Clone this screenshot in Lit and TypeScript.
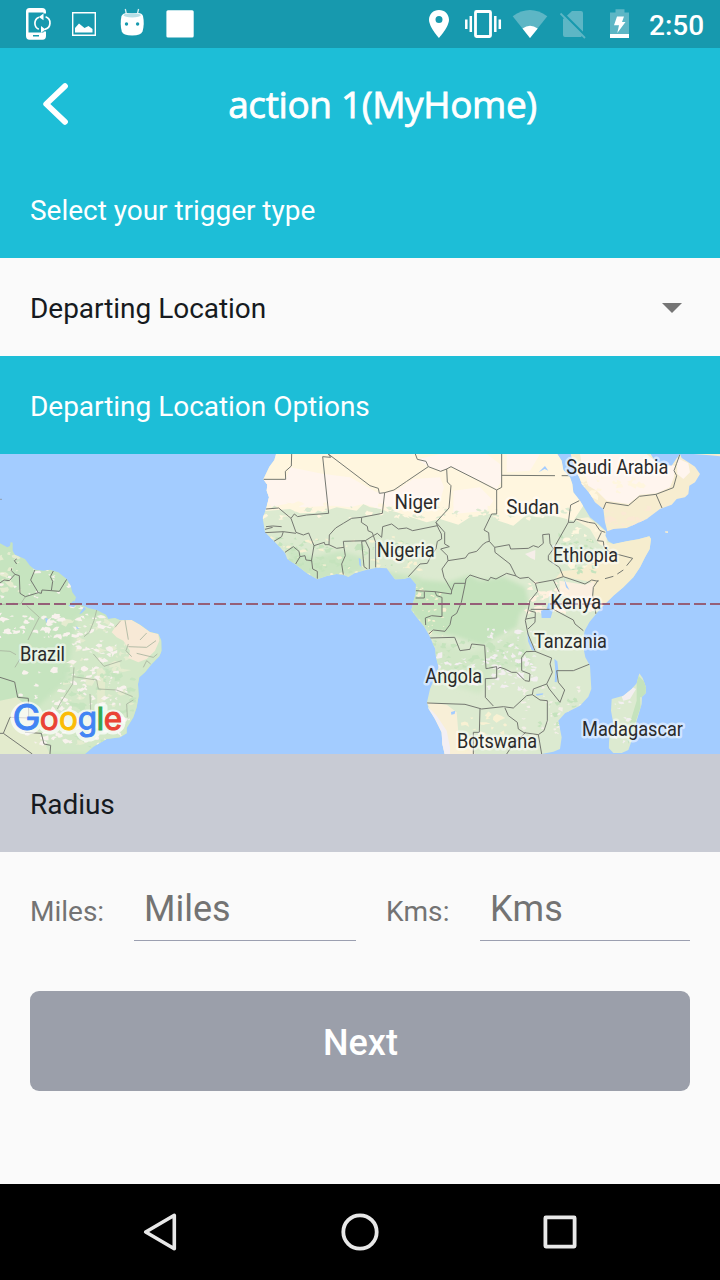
import { LitElement, html, css, svg } from "lit";
import { customElement } from "lit/decorators.js";

/* Map geometry is on a 2160x900 grid, split into three 720-unit wide tiles. */
const SOUTH_AMERICA =
  "M0,268 L22,280 30,276 32,264 38,266 38,290 45,302 75,315 90,335 105,347 130,350 150,347 175,355 200,375 212,395 217,415 228,430 222,448 250,455 265,462 290,468 318,482 325,495 345,492 360,499 395,498 420,512 450,534 475,540 484,560 485,590 478,607 455,630 435,655 418,670 414,690 416,725 410,760 400,790 380,822 380,838 360,850 320,855 280,878 255,900 0,900Z";
const AFRICA =
  "M108,0 L103,18 88,38 70,76 82,92 80,110 87,130 78,165 68,192 75,235 102,262 120,280 135,297 142,315 165,330 200,357 232,376 260,366 290,360 310,362 325,369 345,357 375,349 410,341 440,343 450,356 465,376 490,375 510,370 528,390 527,420 520,445 514,468 530,490 552,517 568,545 586,585 588,610 596,640 585,670 570,705 561,745 566,765 585,795 605,835 607,870 614,900 L905,900 940,893 960,885 965,850 955,800 975,778 1020,755 1045,728 1054,705 1050,635 1036,610 1032,590 1030,555 1034,530 1048,505 1070,478 1085,460 1120,425 1150,400 1180,370 1200,340 1215,310 1229,285 1233,255 1228,247 1195,256 1160,262 1120,270 1105,262 1096,245 1098,232 1075,210 1050,190 1035,165 1020,140 1000,115 997,90 990,70 970,48 965,20 952,0Z";
const ARABIA =
  "M272,0 L283,40 300,75 305,90 330,120 345,145 370,165 375,205 382,232 400,225 440,222 500,195 540,165 575,152 590,135 615,130 625,120 628,95 645,85 660,60 645,38 625,25 605,12 600,0 L588,16 575,35 550,34 525,22 512,0Z";
const MADAGASCAR =
  "M478,658 L488,672 498,700 497,718 486,728 485,750 470,800 455,860 445,888 425,897 400,897 386,882 388,850 402,820 393,770 395,735 430,725 455,705 470,688Z";

const SAM_LINES = [
  "M0,387 L12,378 28,380 45,361 58,365 60,418 76,428 115,416 92,378 105,347",
  "M160,351 L151,368 158,382 154,410 178,412 200,376",
  "M115,416 L124,418 126,408 154,410 M35,343 L34,350 45,361 M50,315 L43,320 50,330",
  "M0,670 L44,684 53,730 85,733 86,792 30,790 10,838 97,900 M0,838 L10,838 M75,835 L124,838 132,870 152,874 150,900",
];
const SAM_FAINT = [
  "M0,452 L40,448 62,450 76,428 M80,455 L118,490 100,525 84,558 M0,590 L30,592 48,602 M60,615 L45,640",
  "M290,468 L282,500 268,535 252,548 M345,520 L362,500 M375,498 L385,557 M385,570 L378,590 395,608 M420,558 L440,537 M385,578 L440,580 468,560 M410,598 L460,610 472,600 M430,640 L440,620 452,630",
  "M280,600 L312,637 365,620 M222,640 L218,690 182,745 172,765 M220,668 L290,678 295,705 350,708 398,728 M270,720 L272,770 265,790 M400,738 L380,750 382,790",
];
const AFR_LINES = [
  "M155,0 L154,36 136,52 137,76 70,76 M265,0 L272,10 248,8 266,178 200,183 173,188 163,180 153,193 116,162 78,165",
  "M265,0 L390,95 415,103 418,118 434,116 462,108 500,82 565,38 M526,0 L532,16 558,22 565,38 602,52 620,45 633,38 720,82 770,108 770,180 755,180 732,228 746,236 748,262 764,280",
  "M434,116 L427,178 365,190 335,193 310,208 287,222 268,243 267,272 255,272 253,265 222,275 206,237 190,243 168,235 153,193",
  "M365,190 L364,205 382,217 384,230 397,236 400,245 376,260 M400,245 L412,238 425,250 428,218 455,210 475,225 500,222 518,230 592,215",
  "M620,45 L622,84 633,95 627,162 588,205 596,225 604,240 605,255 592,262 588,285 575,302 562,328 540,330 505,368",
  "M588,205 L614,235 614,270 628,278 602,285 622,305 624,320 606,345 612,370 635,410 634,420 585,413 527,410",
  "M624,320 L676,312 686,298 710,292 730,270 740,264 748,262",
  "M635,410 L643,388 676,388 678,375 690,363 720,373 745,380 752,370 768,375 800,358 828,366 840,373 865,370 886,388",
  "M676,388 L664,445 650,478 635,488 630,512 615,532 580,528 566,540",
  "M585,413 L590,425 606,430 606,488 575,485 556,492 557,513 M527,432 L553,432 553,413 M568,552 L644,550 660,590 690,586 695,570 734,574 738,644 770,638 770,672 736,674 736,730 760,756",
  "M561,747 L675,751 725,765 790,758 820,762 860,725 877,722 900,738 922,740 922,800 912,830 895,842 852,836 835,825 832,805 805,785 795,762 M720,765 L718,835 700,835 700,900 M895,842 L905,900 M857,835 L820,870 800,900",
  "M75,236 L130,233 168,238 M130,233 L125,248 102,262 M78,218 L98,216 125,218 M75,226 L98,220 M135,295 L160,278 177,292 180,308 167,330 M180,308 L195,305 198,318 215,320 218,345 232,352 232,374 M222,275 L214,322",
  "M267,272 L290,283 312,280 310,262 376,260 365,262 372,338 382,345 M376,260 L388,285 388,345 M400,245 L407,265 407,340 M312,280 L316,305 305,330 310,362",
  "M785,0 L785,100 770,108 M785,64 L945,65 M965,65 L990,65 M1018,140 L992,153 985,205 940,285 925,305",
  "M985,205 L1002,205 1008,195 1045,205 1065,208 1080,230 1096,235 M1084,235 L1072,260 1090,262 1092,278 1110,295 1178,313 1160,335",
  "M1150,348 L1132,360 M1120,367 L1095,374 M1075,378 L1060,400 1058,425 M925,305 L925,318 958,340 970,368 1035,390 1055,378 1075,382 M1058,425 L1068,480",
  "M764,280 L808,272 812,285 865,283 880,275 895,280 910,268 908,242 928,240 930,268 940,285 M764,280 L765,295 810,330 828,366",
  "M886,388 L940,378 970,368 M940,378 L958,415 M886,388 L893,412 870,440 864,470 856,500 864,540 885,590 M872,466 L940,466 1000,498 1005,510 1030,530",
  "M868,470 L886,475 885,505 864,525 M858,495 L885,490 M885,592 L858,593 845,610 845,650 870,660 868,682 855,680 830,655 815,655 795,645 780,640 772,645",
  "M885,592 L935,612 930,630 937,655 920,690 928,705 960,745 974,708 955,685 950,650 1000,650 1050,630 M920,690 L880,705 877,722",
];
const ARA_LINES = [
  "M370,165 L378,145 445,155 478,127 528,121 580,101 590,65 582,50 590,28 600,0",
  "M528,121 L546,162",
];

/* Small irregular patches of vegetation and bare ground. */
function patches(seed: number, n: number, x: number, y: number, w: number, h: number, size: number) {
  let s = seed;
  const r = () => (s = (s * 16807) % 2147483647) / 2147483647;
  let d = "";
  for (let i = 0; i < n; i++) {
    const cx = x + r() * w, cy = y + r() * h, k = size * (0.3 + r());
    for (let j = 0; j < 7; j++) {
      const a = (j / 7) * Math.PI * 2, q = k * (0.15 + r() * 1.3);
      d += (j ? "L" : "M") + (cx + Math.cos(a) * q * 1.3).toFixed(1) + "," + (cy + Math.sin(a) * q * 0.8).toFixed(1);
    }
    d += "Z";
  }
  return d;
}

const LABELS: [string, number, number, number][] = [
  ["Niger", 394.5, 55, 45],
  ["Nigeria", 376.8, 103, 58],
  ["Sudan", 506.3, 60, 53],
  ["Saudi Arabia", 566.3, 20, 102],
  ["Ethiopia", 553, 108, 65],
  ["Kenya", 550.3, 155, 51],
  ["Tanzania", 534, 194, 73],
  ["Angola", 425.3, 229, 57],
  ["Botswana", 457, 294, 80],
  ["Madagascar", 582, 282, 101],
  ["Brazil", 20, 207, 45],
];
const LOGO: [string, number, string][] = [
  ["o", 39.8, "#ea4335"], ["o", 59, "#fbbc05"],
  ["g", 77.8, "#4285f4"], ["l", 96.5, "#34a853"], ["e", 103.7, "#ea4335"],
];

@customElement("location-map")
class LocationMap extends LitElement {
  static styles = css`
    :host { display: block; height: 300px; }
    svg { display: block; }
    .border { fill: none; stroke: #747770; stroke-width: 3; stroke-linejoin: round; }
    .faint { fill: none; stroke: #a9b5a0; stroke-width: 2.6; }
    .label { font-family: Roboto, sans-serif; font-size: 19.5px; fill: #2b2b2b; stroke: #fff; stroke-opacity: .5; stroke-width: 5px; stroke-linejoin: round; paint-order: stroke; }
    .logo { font-family: Inter, sans-serif; font-size: 31.5px; font-weight: 400; stroke-width: 1px; }
    .cap { font-size: 35px; }
    .halo { stroke: #fff; fill: #fff; opacity: .7; stroke-width: 7px; stroke-linejoin: round; }
  `;
  render() {
    const lines = (a: string[], c: string) => a.map((d) => svg`<path class=${c} d=${d}/>`);
    return html`<svg width="720" height="300" viewBox="0 0 720 300">
      <defs>
        <clipPath id="sa"><path d=${SOUTH_AMERICA} /></clipPath>
        <clipPath id="af"><path d=${AFRICA} /></clipPath>
        <clipPath id="ar"><path d=${ARABIA} /></clipPath>
        <clipPath id="md"><path d=${MADAGASCAR} /></clipPath>
        <filter id="soft"><feGaussianBlur stdDeviation="7" /></filter>
      </defs>
      <rect width="720" height="300" fill="#a3ccff" />
      <g transform="scale(.333333)">
        <g clip-path="url(#sa)">
          <rect width="500" height="900" fill="#c6e4bf" />
          <path filter="url(#soft)" fill="#d3e8c8" d="M230,490 L500,490 500,900 100,900 90,780 200,680Z" />
          <path fill="#e3ebcd" d="M0,740 L50,730 85,760 86,792 120,840 150,900 0,900Z M290,640 L316,660 314,740 292,750Z" />
          <path fill="#e5ecd0" d=${patches(19, 60, 200, 500, 200, 380, 11)} />
          <path fill="#e5ecd0" d=${patches(9, 16, 0, 280, 60, 150, 11)} />
          <path fill="#f8f2ed" d=${patches(7, 45, 0, 480, 210, 75, 8)} />
          <path fill="#f8f2ed" d=${patches(71, 100, 60, 640, 330, 240, 8)} />
          <path fill="#f8f2ed" d=${patches(37, 45, 210, 450, 140, 200, 9)} />
          <path fill="#f8f2ed" d=${patches(13, 22, 0, 290, 210, 140, 6)} />
          <path fill="#c6e4bf" d=${patches(99, 45, 200, 640, 210, 240, 10)} />
          <path fill="#f7e9d6" d="M360,499 L395,498 420,512 450,534 475,540 478,560 465,590 440,615 415,625 385,612 390,590 370,560 350,550 335,535Z" />
          <path fill="#a3ccff" d="M238,480 L252,458 258,465 245,478Z M138,508 L136,492 144,494Z M228,516 L238,524 230,524Z M205,456 L220,440 232,448 222,460Z" />
          ${lines(SAM_FAINT, "faint")}${lines(SAM_LINES, "border")}
        </g>
        <g transform="translate(720 0)">
          <g clip-path="url(#af)">
            <rect width="1260" height="900" fill="#dcead0" />
            <path fill="#fff6df" d="M0,0 L1010,0 1040,140 1000,200 960,190 900,178 860,182 820,215 775,200 755,178 730,185 690,190 655,212 600,195 560,205 500,185 470,175 430,165 390,160 370,150 350,170 290,160 240,176 180,178 150,165 60,172Z" />
            <path fill="#fff5ee" d="M70,78 L137,76 150,40 250,60 330,70 410,115 434,116 465,112 520,75 600,70 612,100 600,140 560,150 460,155 420,165 370,150 330,160 280,155 180,160 150,148 85,160Z M600,0 L740,0 780,30 785,80 770,105 633,38 602,52 565,38 532,16Z M640,110 L720,100 760,140 740,170 640,180Z M800,0 L900,0 870,50 800,55Z" />
            <path fill="#fff6df" d=${patches(21, 40, 70, 150, 920, 50, 11)} />
            <path fill="#dcead0" d=${patches(29, 60, 90, 160, 900, 40, 8)} />
            <path filter="url(#soft)" fill="#c5e3bd" d="M520,375 L625,385 690,363 720,380 790,368 855,400 868,450 840,480 830,520 760,555 730,575 640,545 560,530 500,460Z" />
            <path filter="url(#soft)" fill="#cbe5c2" d="M130,270 L220,310 300,290 370,310 370,350 230,390 160,340Z M430,350 L540,370 540,400 460,390Z" />
            <path filter="url(#soft)" fill="#d2e7c7" d="M580,560 L690,595 740,580 850,520 880,640 760,650 720,720 590,680Z" />
            <path fill="#c5e3bd" d=${patches(41, 75, 110, 250, 400, 120, 8)} />
            <path fill="#f8f1d3" d=${patches(23, 65, 90, 250, 460, 110, 6)} />
            <path fill="#f8f1d3" d=${patches(57, 30, 520, 400, 100, 150, 6)} />
            <path fill="#c5e3bd" d=${patches(47, 40, 580, 560, 280, 80, 9)} />
            <path fill="#f3eff0" d=${patches(31, 55, 590, 600, 300, 110, 8)} />
            <path fill="#f3eff0" d=${patches(43, 45, 740, 520, 150, 160, 7)} />
            <path fill="#f4efe8" d=${patches(67, 35, 850, 700, 170, 150, 7)} />
            <path fill="#f8efd7" d="M561,745 L620,752 650,775 655,835 690,860 705,900 600,900 600,830Z" />
            <path fill="#f3eff3" d="M561,755 L590,785 620,830 630,880 630,900 605,900Z" />
            <path fill="#f8f1d3" d=${patches(83, 24, 650, 780, 150, 110, 10)} />
            <path fill="#f6edce" d="M1085,262 L1120,270 1240,240 1230,300 1180,380 1085,460 1060,430 1060,385 970,368 945,375 965,352 1030,345 1060,310 1110,300Z" />
            <path fill="#f9f2d9" d="M1002,195 L1045,190 1100,235 1100,285 1075,268 1050,225Z" />
            <path fill="#fbefe0" d="M958,380 L1035,392 1062,382 1058,425 1085,460 1050,475 1020,450 985,430 960,415Z" />
            <path fill="#fff1df" d=${patches(91, 40, 865, 385, 130, 90, 9)} />
            <path fill="#c5e3bd" d=${patches(53, 40, 955, 240, 110, 120, 7)} />
            <path fill="#fff7df" d=${patches(63, 16, 980, 220, 100, 130, 8)} />
            <path fill="#f6eee9" d="M855,300 L886,288 885,318 872,312Z" />
            <path fill="#c5e3bd" d=${patches(59, 22, 900, 730, 140, 110, 7)} />
            <path fill="#a3ccff" d="M903,470 L920,465 925,448 940,445 940,465 932,492 905,492Z M862,525 L870,560 884,590 875,588 864,562Z M943,615 L952,622 955,648 950,685 944,684 946,650Z M972,372 L980,392 988,408 978,400Z M356,312 L362,315 364,340 358,333Z M633,774 L646,770 644,780 634,782Z M888,720 L910,718 908,722 890,725Z M896,55 L915,36 925,50 914,45Z" />
            ${lines(AFR_LINES, "border")}
          </g>
        </g>
        <g transform="translate(1440 0)">
          <g clip-path="url(#ar)">
            <rect x="250" width="450" height="250" fill="#f7edd0" />
            <path fill="#fff5ee" d="M300,0 L500,0 530,25 585,35 582,70 570,100 530,118 480,122 445,150 380,140 350,110 325,95 310,55Z M590,12 L625,28 630,55 610,75 592,60Z" />
            <path fill="#fbe9d4" d=${patches(77, 20, 380, 165, 170, 50, 10)} />
            <path fill="#fff6df" d=${patches(78, 20, 300, 60, 200, 70, 12)} />
            ${lines(ARA_LINES, "border")}
          </g>
          <path fill="#f7edd0" d="M640,0 L720,0 720,7 690,4Z M555,232 L564,232 564,237 556,236Z" />
          <g clip-path="url(#md)">
            <rect x="370" y="640" width="150" height="260" fill="#dcead0" />
            <path fill="#c5e3bd" d="M470,660 L500,690 498,730 480,730 482,760 468,800 445,870 440,840 470,740Z" />
            <path fill="#f3eff0" d="M425,728 L458,700 468,705 450,735 430,740Z" />
            <path fill="#f3eff0" d=${patches(88, 12, 400, 740, 60, 130, 6)} />
          </g>
        </g>
        <path stroke="#955f78" stroke-width="6" stroke-dasharray="36 12" stroke-dashoffset="30" d="M0,450 H2160" />
        <path stroke="#888" stroke-width="2" d="M0,136 H6" />
      </g>
      ${LABELS.map(([t, x, y, w]) => svg`<text class="label" x=${x} y=${y} textLength=${w} lengthAdjust="spacingAndGlyphs">${t}</text>`)}
      <g class="halo" aria-hidden="true"><circle cx="27" cy="264" r="13" /><circle cx="50" cy="268" r="9" /><circle cx="69" cy="268" r="9" /><rect x="79" y="259" width="18" height="25" rx="8" /><rect x="98" y="253" width="6" height="24" /><circle cx="113" cy="268" r="9" /></g>
      <text class="logo" y="276.3"><tspan class="cap" x="12.4" fill="#4285f4" stroke="#4285f4" textLength="28" lengthAdjust="spacingAndGlyphs">G</tspan>${LOGO.map(([c, x, f]) => svg`<tspan x=${x} fill=${f} stroke=${f}>${c}</tspan>`)}</text>
    </svg>`;
  }
}

@customElement("status-bar")
class StatusBar extends LitElement {
  static styles = css`
    :host { display: flex; height: 48px; background: #1799ae; color: #fff; box-sizing: border-box; padding: 0 0 0 20px; }
    svg { display: block; flex: none; }
    .space { flex: 1; }
    .clock { width: 71px; font: 500 28px/52px Roboto, sans-serif; height: 48px; white-space: nowrap; }
  `;
  render() {
    return html`
      <svg width="42" height="48" viewBox="20 0 42 48">
        <path fill="#fff" fill-rule="evenodd" d="M29.5,8 H42 Q46,8 46,12 V13.5 H43.5 V12.5 H28.5 V32.5 H43.5 V31.5 H46 V36 Q46,39.7 42.5,39.7 H29.5 Q26,39.7 26,36 V11.5 Q26,8 29.5,8Z M33,35 V36.5 H39 V35Z" />
        <path d="M38.8,29.2 A6.5,6.5 0 0 1 39,17.2 M45.6,16.8 A6.5,6.5 0 0 1 44.8,29.3" fill="none" stroke="#fff" stroke-width="1.7" />
        <path d="M43.5,13.5 V20.3 L38.8,17Z M41,26 V32.8 L45.6,29.5Z" fill="#fff" />
      </svg>
      <svg width="46" height="48" viewBox="62 0 46 48">
        <path d="M72.7,12.7 H95.3 V35.3 H72.7Z" fill="none" stroke="#fff" stroke-width="1.4" />
        <path fill="#fff" d="M75,32.5 V28 L79,23.5 L84.5,28 L88.5,26 L92.5,29 V32.5Z" />
      </svg>
      <svg width="46" height="48" viewBox="108 0 46 48">
        <path d="M126.5,14.5 L125.3,9 M137.2,14.5 L138.6,9" stroke="#d8eef1" stroke-width="1.3" />
        <path fill="#fff" d="M121.5,16 Q123,13 127,13 H138 Q142,13 143,16 Q144.7,24 142.5,31.5 Q141,35.5 132.2,35.5 Q123,35.5 121.8,31.5 Q119.8,24 121.5,16Z" />
        <ellipse cx="132.2" cy="15.2" rx="8.7" ry="2.2" fill="#b8dfe6" />
        <circle cx="126.5" cy="24" r="1.7" fill="#1799ae" /><circle cx="137.6" cy="24" r="1.7" fill="#1799ae" />
      </svg>
      <svg width="46" height="48" viewBox="154 0 46 48"><rect x="166.4" y="10.2" width="27.3" height="27.3" rx="1.6" fill="#fff" /></svg>
      <span class="space"></span>
      <svg width="30" height="48" viewBox="427 0 30 48">
        <path fill="#fff" fill-rule="evenodd" d="M439,10 C433.3,10 429,14.2 429,19.8 C429,27 439,38 439,38 C439,38 449,27 449,19.8 C449,14.2 444.7,10 439,10Z M439,16 A3.5,3.5 0 1 1 439,23 A3.5,3.5 0 1 1 439,16Z" />
      </svg>
      <svg width="50" height="48" viewBox="457 0 50 48">
        <rect x="475.5" y="11.5" width="15" height="25" rx="1" fill="none" stroke="#fff" stroke-width="2.8" />
        <path stroke="#fff" stroke-width="2.5" d="M466.3,19.5 V29 M470.8,16 V32 M495.3,16 V32 M499.8,19.5 V29" />
      </svg>
      <svg width="46" height="48" viewBox="507 0 46 48">
        <path fill="#5db6c5" d="M530,38 L512.7,16.2 Q529.9,4 547.3,16.2Z" />
        <path fill="#fff" d="M530,38 L522.5,28.6 Q530,23 537.7,28.6Z" />
      </svg>
      <svg width="45" height="48" viewBox="553 0 45 48">
        <path d="M566,16.5 L572,11 H581 Q583,11 583,13 V34.5 L581,37 H565 Q563,37 563,35 V19Z" fill="#5db6c5" />
        <path d="M562,12.4 L586,36.4" stroke="#1799ae" stroke-width="2.4" />
        <path d="M560.5,13.5 L585,38" stroke="#5db6c5" stroke-width="1.8" />
      </svg>
      <svg width="51" height="48" viewBox="598 0 51 48">
        <path fill="#5db6c5" d="M610,12.5 H615.5 V9.3 H624.5 V12.5 H629 V34 H610Z" />
        <path fill="#fff" d="M610,34 H629 V38 H610Z M617,16.5 H624 L622,22 H625.5 L617.3,33 L619,25.3 H614Z" />
      </svg>
      <span class="clock">2:50</span>`;
  }
}

@customElement("app-root")
class AppRoot extends LitElement {
  static styles = css`
    :host { display: flex; flex-direction: column; height: 1280px; width: 720px; overflow: hidden; background: #fafafa; font-family: Roboto, sans-serif; font-size: 28px; color: #161a20; }
    svg { display: block; flex: none; }
    .header { display: flex; align-items: center; height: 112px; padding: 0 30px 0 38px; background: #1dbed7; color: #fff; }
    .title { flex: 1; text-align: center; padding: 0 0 0 3px; font: 400 37px/52px "Open Sans", sans-serif; letter-spacing: -.38px; -webkit-text-stroke: .8px #fff; white-space: nowrap; }
    .row { display: flex; align-items: center; justify-content: space-between; box-sizing: border-box; height: 98px; padding: 3px 38px 0 30px; flex: none; letter-spacing: -.03px; }
    .caret { margin-bottom: 2px; }
    .teal { background: #1dbed7; color: #fff; }
    .gray { background: #c8cbd4; }
    .fields { display: flex; height: 89px; padding: 0 30px; color: #737373; flex: none; }
    .name { padding-top: 43px; line-height: 33px; width: 104px; }
    .second { padding-left: 30px; width: 94px; letter-spacing: .15px; }
    .input { width: 212px; padding: 36px 0 0 10px; font-size: 36px; line-height: 43px; border-bottom: 1px solid #9b9fb0; }
    .short { width: 200px; letter-spacing: .3px; }
    .next { margin: 50px 30px 0; height: 100px; border-radius: 9px; background: #9b9faa; color: #fff; font: 500 36px/42px Roboto, sans-serif; text-align: center; border: 0; padding: 4px 0 0 1px; flex: none; }
    .nav { margin-top: auto; display: flex; justify-content: space-between; height: 96px; padding: 0 140px; background: #000; }
  `;
  render() {
    return html`
      <status-bar></status-bar>
      <header class="header">
        <svg width="34" height="112" viewBox="38 48 34 112"><path d="M65,86.2 L46.2,104 L65,121.8" fill="none" stroke="#fff" stroke-width="5.8" stroke-linecap="round" stroke-linejoin="round" /></svg>
        <div class="title">action 1(MyHome)</div>
      </header>
      <div class="row teal">Select your trigger type</div>
      <div class="row">Departing Location
        <svg class="caret" width="20" height="10" viewBox="0 0 20 10"><path d="M0,0 H20 L10,10Z" fill="#757575" /></svg>
      </div>
      <div class="row teal">Departing Location Options</div>
      <location-map></location-map>
      <div class="row gray">Radius</div>
      <div class="fields">
        <div class="name">Miles:</div><div class="input">Miles</div>
        <div class="name second">Kms:</div><div class="input short">Kms</div>
      </div>
      <button class="next">Next</button>
      <nav class="nav">
        <svg width="40" height="96" viewBox="140 1184 40 96"><path d="M174.3,1215.3 V1248.7 L145.7,1232Z" fill="none" stroke="#e8e8e8" stroke-width="3.6" stroke-linejoin="round" /></svg>
        <svg width="40" height="96" viewBox="340 1184 40 96"><circle cx="360" cy="1232" r="16.7" fill="none" stroke="#e8e8e8" stroke-width="3.8" /></svg>
        <svg width="40" height="96" viewBox="540 1184 40 96"><rect x="545.4" y="1217.4" width="29.2" height="29.2" rx=".5" fill="none" stroke="#e8e8e8" stroke-width="3.8" stroke-linejoin="round" /></svg>
      </nav>`;
  }
}
